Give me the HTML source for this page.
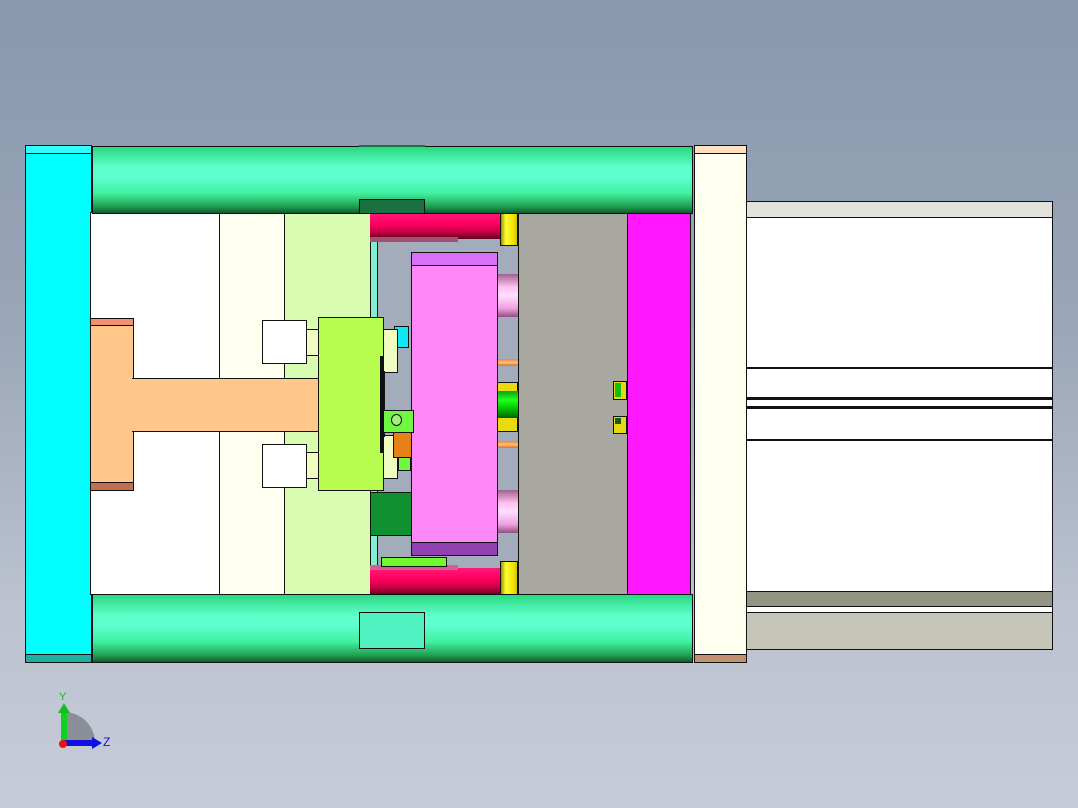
<!DOCTYPE html>
<html><head><style>
*{margin:0;padding:0;box-sizing:border-box}
body{width:1078px;height:808px;overflow:hidden;background:linear-gradient(180deg,#8898ad 0%,#9aa6b8 40%,#bcc2d0 75%,#c8ccd8 100%);position:relative;font-family:"Liberation Sans",sans-serif}
.r{position:absolute;border:1.5px solid #111}
.n{position:absolute}
.bar{background:linear-gradient(180deg,#2ad880 0%,#5effc8 30%,#60ffd0 45%,#40f0a0 70%,#20a050 90%,#105a30 100%)}
.red{background:linear-gradient(180deg,#ff1a7a 0%,#ff0060 40%,#d00048 70%,#600020 100%)}
.yel{background:linear-gradient(90deg,#a09000 0%,#ffff30 30%,#f0e000 80%,#d0c000 100%)}
.pk{background:linear-gradient(180deg,#a06090 0%,#ffc0f0 30%,#ffe0ff 50%,#f0a0e0 80%,#905080 100%)}
.or{background:linear-gradient(180deg,#f08030,#ffc080,#e07020)}
</style></head><body>
<!-- left cyan plate -->
<div class="r" style="left:25px;top:145px;width:67px;height:518px;background:#00ffff"></div>
<div class="r" style="left:25px;top:145px;width:67px;height:9px;background:#30ffff"></div>
<div class="r" style="left:25px;top:654px;width:67px;height:9px;background:#20b0a0"></div>
<!-- middle zone -->
<div class="r" style="left:90px;top:212px;width:130px;height:383px;background:#fff"></div>
<div class="r" style="left:219px;top:212px;width:66px;height:383px;background:#fffff0"></div>
<div class="r" style="left:284px;top:212px;width:88px;height:383px;background:#d8fcb0"></div>
<div class="n" style="left:370px;top:212px;width:148px;height:383px;background:#a3acbb"></div>
<div class="n" style="left:370px;top:240px;width:8px;height:326px;background:#80f0d0;border-left:1px solid #111;border-right:1px solid #111"></div>
<div class="n red" style="left:370px;top:213px;width:131px;height:26px"></div>
<div class="n" style="left:370px;top:237px;width:88px;height:5px;background:#a05070"></div>
<div class="n red" style="left:370px;top:568px;width:131px;height:27px"></div>
<div class="n" style="left:370px;top:565px;width:88px;height:5px;background:#d06090"></div>
<div class="r" style="left:381px;top:557px;width:66px;height:10px;background:#70f830"></div>
<div class="n yel" style="left:500px;top:213px;width:18px;height:33px;border:1px solid #111"></div>
<div class="n yel" style="left:500px;top:561px;width:18px;height:34px;border:1px solid #111"></div>
<div class="n pk" style="left:497px;top:274px;width:21px;height:43px"></div>
<div class="n pk" style="left:497px;top:490px;width:21px;height:43px"></div>
<div class="n or" style="left:497px;top:359px;width:21px;height:7px"></div>
<div class="n or" style="left:497px;top:441px;width:21px;height:7px"></div>
<div class="r" style="left:497px;top:382px;width:21px;height:50px;background:#e8dc10"></div>
<div class="n" style="left:498px;top:391px;width:20px;height:27px;background:linear-gradient(180deg,#10a010,#20ff20,#00c000,#006000)"></div>
<!-- pink block -->
<div class="r" style="left:411px;top:252px;width:87px;height:304px;background:#ff88f8"></div>
<div class="r" style="left:411px;top:252px;width:87px;height:14px;background:#d870f8"></div>
<div class="r" style="left:411px;top:542px;width:87px;height:14px;background:#9040b0"></div>
<!-- grey & magenta -->
<div class="r" style="left:518px;top:212px;width:110px;height:383px;background:#a8a8a0"></div>
<div class="r" style="left:627px;top:212px;width:64px;height:383px;background:#ff18ff"></div>
<div class="r" style="left:613px;top:381px;width:14px;height:19px;background:#e8d810"><div style="margin:1px;width:6px;height:14px;background:#10c010"></div></div>
<div class="r" style="left:613px;top:416px;width:14px;height:18px;background:#e8d810"><div style="margin:1px;width:6px;height:6px;background:#106010"></div></div>
<!-- T shape -->
<div class="r" style="left:90px;top:318px;width:44px;height:173px;background:#ffc88a"></div>
<div class="r" style="left:90px;top:318px;width:44px;height:8px;background:#f09070"></div>
<div class="r" style="left:90px;top:482px;width:44px;height:9px;background:#c07050"></div>
<div class="r" style="left:132px;top:378px;width:197px;height:54px;background:#ffc88a;border-left:none"></div>
<div class="r" style="left:262px;top:320px;width:45px;height:44px;background:#fff"></div>
<div class="r" style="left:262px;top:444px;width:45px;height:44px;background:#fff"></div>
<div class="r" style="left:306px;top:329px;width:13px;height:27px;background:#f0fcc0"></div>
<div class="r" style="left:306px;top:452px;width:13px;height:27px;background:#f0fcc0"></div>
<!-- lime block & details -->
<div class="r" style="left:394px;top:326px;width:15px;height:22px;background:#10e8f8"></div>
<div class="r" style="left:383px;top:329px;width:15px;height:44px;background:#f0fcc0"></div>
<div class="r" style="left:383px;top:435px;width:15px;height:44px;background:#f0fcc0"></div>
<div class="r" style="left:393px;top:432px;width:19px;height:26px;background:#e88018"></div>
<div class="r" style="left:398px;top:457px;width:13px;height:14px;background:#70f840"></div>
<div class="r" style="left:370px;top:492px;width:42px;height:44px;background:#109030"></div>
<div class="r" style="left:370px;top:371px;width:15px;height:66px;background:#a3acbb"></div>
<div class="n" style="left:373px;top:380px;width:10px;height:6px;background:#fff;border:1px solid #111"></div>
<div class="n" style="left:373px;top:416px;width:10px;height:6px;background:#fff;border:1px solid #111"></div>
<div class="r" style="left:383px;top:410px;width:31px;height:23px;background:#70f840"><div style="position:absolute;left:7px;top:3px;width:11px;height:12px;border-radius:50%;border:1px solid #111;background:#a0f080"></div></div>
<div class="r" style="left:318px;top:317px;width:66px;height:174px;background:#b8fc50"></div>
<div class="n" style="left:380px;top:356px;width:3px;height:97px;background:#111"></div>
<!-- tie bars -->
<div class="n bar" style="left:92px;top:146px;width:601px;height:68px;border:1px solid #111"></div>
<div class="r" style="left:359px;top:199px;width:66px;height:15px;background:#1a7040"></div>
<div class="n" style="left:359px;top:145px;width:66px;height:2px;background:#1a7040"></div>
<div class="n bar" style="left:92px;top:594px;width:601px;height:69px;border:1px solid #111"></div>
<div class="r" style="left:359px;top:612px;width:66px;height:37px;background:#50f0c0"></div>
<!-- right ivory plate -->
<div class="r" style="left:694px;top:145px;width:53px;height:518px;background:#fffff0"></div>
<div class="r" style="left:694px;top:145px;width:53px;height:9px;background:#ffe0c0"></div>
<div class="r" style="left:694px;top:654px;width:53px;height:9px;background:#c09070"></div>
<!-- right box -->
<div class="r" style="left:746px;top:201px;width:307px;height:449px;background:#fff"></div>
<div class="r" style="left:746px;top:201px;width:307px;height:17px;background:#e2e2da"></div>
<div class="n" style="left:746px;top:367px;width:307px;height:2px;background:#111"></div>
<div class="n" style="left:746px;top:397px;width:307px;height:3px;background:#111"></div>
<div class="n" style="left:746px;top:406px;width:307px;height:3px;background:#111"></div>
<div class="n" style="left:746px;top:439px;width:307px;height:2px;background:#111"></div>
<div class="r" style="left:746px;top:591px;width:307px;height:16px;background:#949484"></div>
<div class="r" style="left:746px;top:612px;width:307px;height:38px;background:#c6c6b8"></div>
<!-- axis triad -->
<svg class="n" style="left:50px;top:685px" width="70" height="70" viewBox="0 0 70 70">
<path d="M14 58 L14 27 A31 31 0 0 1 45 58 Z" fill="#8a8e96"/>
<rect x="11" y="24" width="6" height="34" fill="#10d020"/>
<polygon points="8,28 14,18 20,28" fill="#10c020"/>
<rect x="14" y="55" width="30" height="6" fill="#1010e0"/>
<polygon points="42,52 52,58 42,64" fill="#1010e0"/>
<circle cx="13" cy="59" r="4" fill="#f01010"/>
<text x="9" y="15" font-size="11" fill="#10c010" font-family="Liberation Sans">Y</text>
<text x="53" y="61" font-size="12" fill="#1010e0" font-family="Liberation Sans">Z</text>
</svg>
</body></html>
